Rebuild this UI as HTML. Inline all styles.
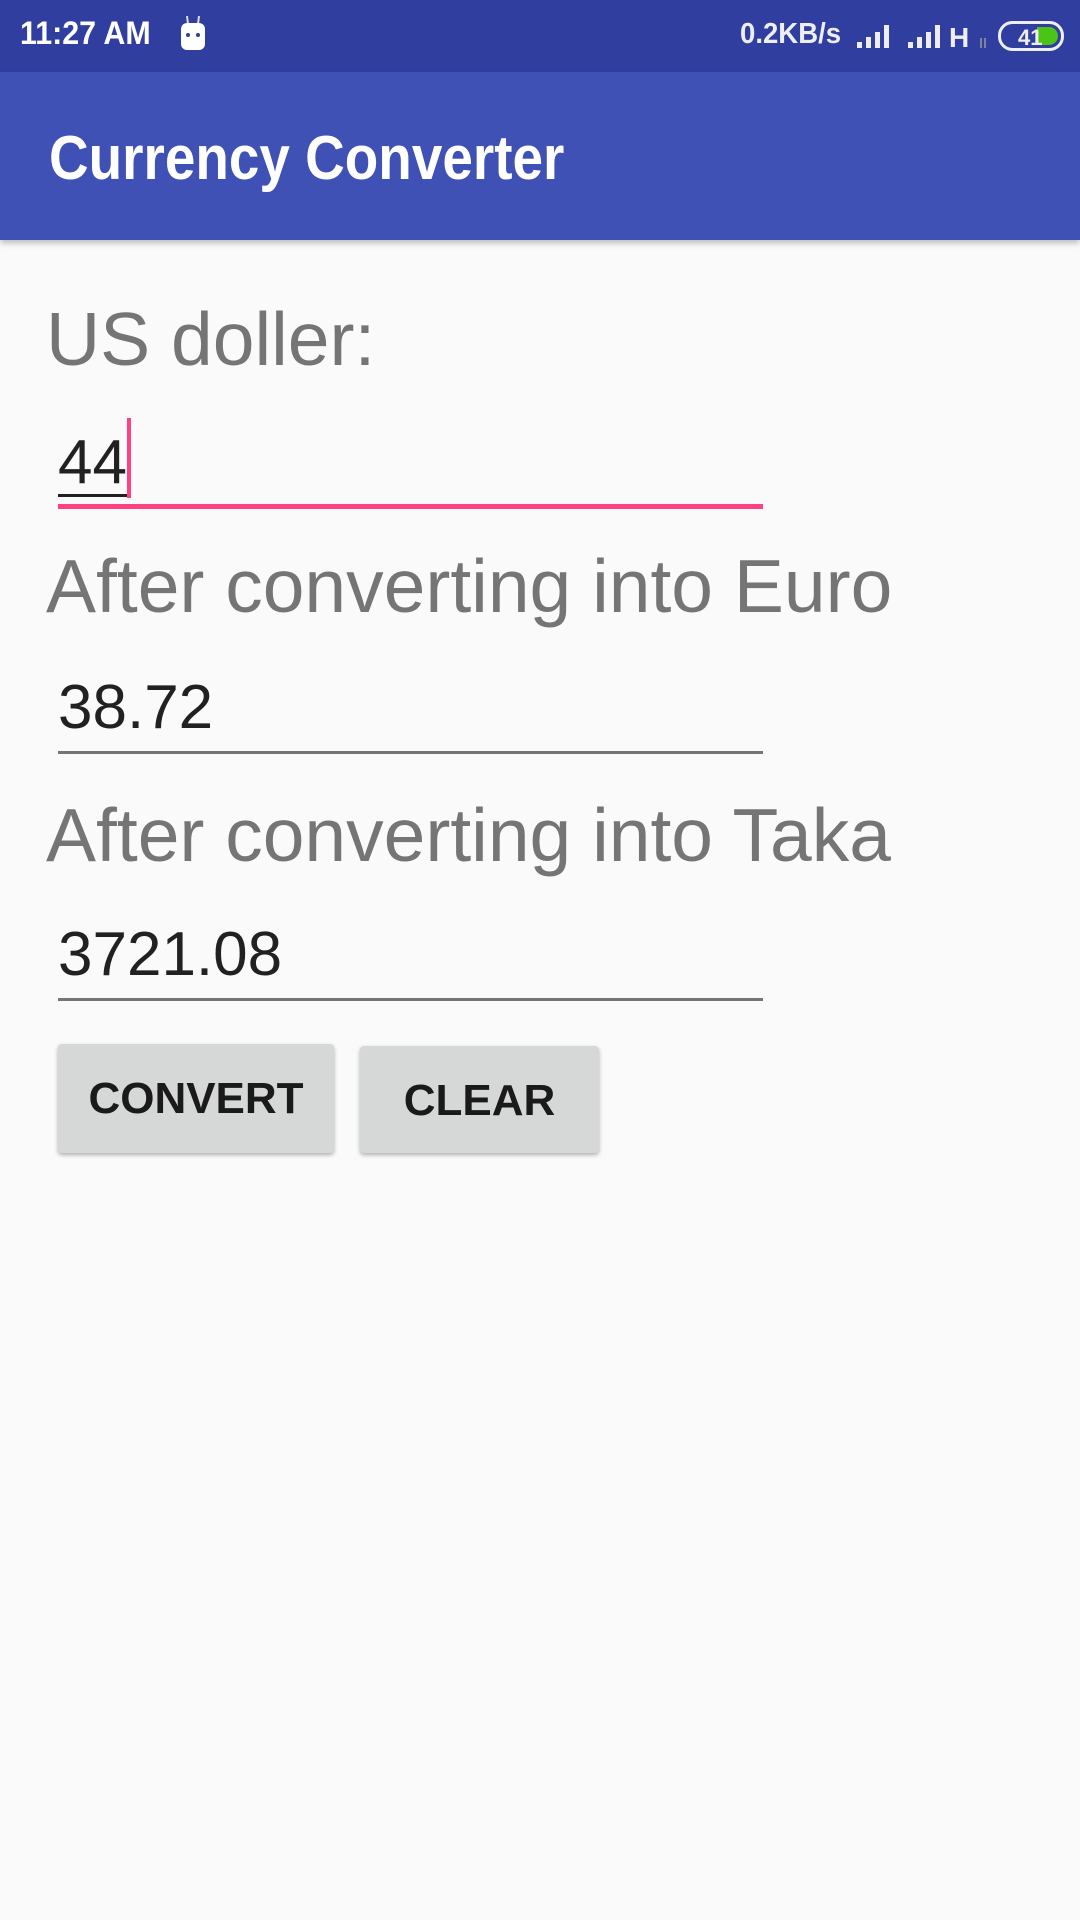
<!DOCTYPE html>
<html><head><meta charset="utf-8"><style>
*{margin:0;padding:0;box-sizing:border-box}
body{width:1080px;height:1920px;background:#FAFAFA;font-family:"Liberation Sans",sans-serif;position:relative;overflow:hidden}
.abs{position:absolute;white-space:nowrap}
.sb{position:absolute;left:0;top:0;width:1080px;height:72px;background:#303F9F}
.ab{position:absolute;left:0;top:72px;width:1080px;height:168px;background:#3F51B5;box-shadow:0 3px 6px rgba(0,0,0,0.25)}
.lbl{font-size:75px;color:#757575;left:46px}
.val{font-size:62px;color:#212121;left:58px}
.line{position:absolute;left:58px;width:705px;height:3px;background:#757575}
.btn{position:absolute;background:#D6D7D7;border-radius:4px;box-shadow:0 2px 4px rgba(0,0,0,0.3);font-weight:bold;font-size:44px;color:#1a1a1a;text-align:center;line-height:109px}
</style></head><body>
<div class="sb"></div>
<div class="abs" style="left:20px;top:15px;font-size:32px;font-weight:bold;color:#fff;transform:scaleX(0.95);transform-origin:left">11:27 AM</div>
<svg class="abs" style="left:178px;top:16px" width="30" height="36" viewBox="0 0 30 36"><line x1="9" y1="0" x2="10" y2="8" stroke="#ddd" stroke-width="2"/><line x1="21" y1="0" x2="20" y2="8" stroke="#ddd" stroke-width="2"/><rect x="3" y="7" width="24" height="27" rx="6" fill="#fff"/><circle cx="10" cy="19" r="2" fill="#303F9F"/><circle cx="20" cy="19" r="2" fill="#303F9F"/></svg>
<div class="abs" style="left:740px;top:18px;font-size:29px;font-weight:bold;color:#eee;transform:scaleX(0.95);transform-origin:left">0.2KB/s</div>
<svg class="abs" style="left:855px;top:22px" width="135" height="28" viewBox="0 0 135 28">
<g fill="#eee"><rect x="2" y="20" width="5" height="6"/><rect x="11" y="15" width="5" height="11"/><rect x="20" y="10" width="5" height="16"/><rect x="29" y="3" width="5" height="23"/>
<rect x="53" y="20" width="5" height="6"/><rect x="62" y="15" width="5" height="11"/><rect x="71" y="10" width="5" height="16"/><rect x="80" y="3" width="5" height="23"/></g>
<text x="94" y="25" font-family="Liberation Sans" font-weight="bold" font-size="28" fill="#eee">H</text>
<g stroke="#999" stroke-width="1.5"><line x1="126" y1="16" x2="126" y2="26"/><line x1="130" y1="16" x2="130" y2="26"/></g></svg>
<svg class="abs" style="left:998px;top:21px" width="66" height="30" viewBox="0 0 66 30"><rect x="1.5" y="1.5" width="63" height="27" rx="13" fill="none" stroke="#eee" stroke-width="3"/><path d="M39 6h12a9 9 0 0 1 0 18h-12z" fill="#4CC417"/><text x="20" y="24" font-family="Liberation Sans" font-weight="bold" font-size="22" fill="#eee">41</text></svg>
<div class="ab"></div>
<div class="abs" style="left:49px;top:123px;font-size:62px;font-weight:bold;color:#fff;transform:scaleX(0.885);transform-origin:left">Currency Converter</div>

<div class="abs lbl" style="top:296px">US doller:</div>
<div class="abs val" style="top:427px">44</div>
<div class="abs" style="left:58px;top:494px;width:70px;height:3px;background:#212121"></div>
<div class="abs" style="left:127px;top:418px;width:4px;height:80px;background:#FF4081"></div>
<div class="line" style="top:504px;height:5px;background:#FF4081"></div>

<div class="abs lbl" style="top:543px">After converting into Euro</div>
<div class="abs val" style="top:672px">38.72</div>
<div class="line" style="top:751px"></div>

<div class="abs lbl" style="top:792px">After converting into Taka</div>
<div class="abs val" style="top:919px">3721.08</div>
<div class="line" style="top:998px"></div>

<div class="btn" style="left:58px;top:1044px;width:276px;height:109px">CONVERT</div>
<div class="btn" style="left:360px;top:1046px;width:239px;height:107px">CLEAR</div>
</body></html>
